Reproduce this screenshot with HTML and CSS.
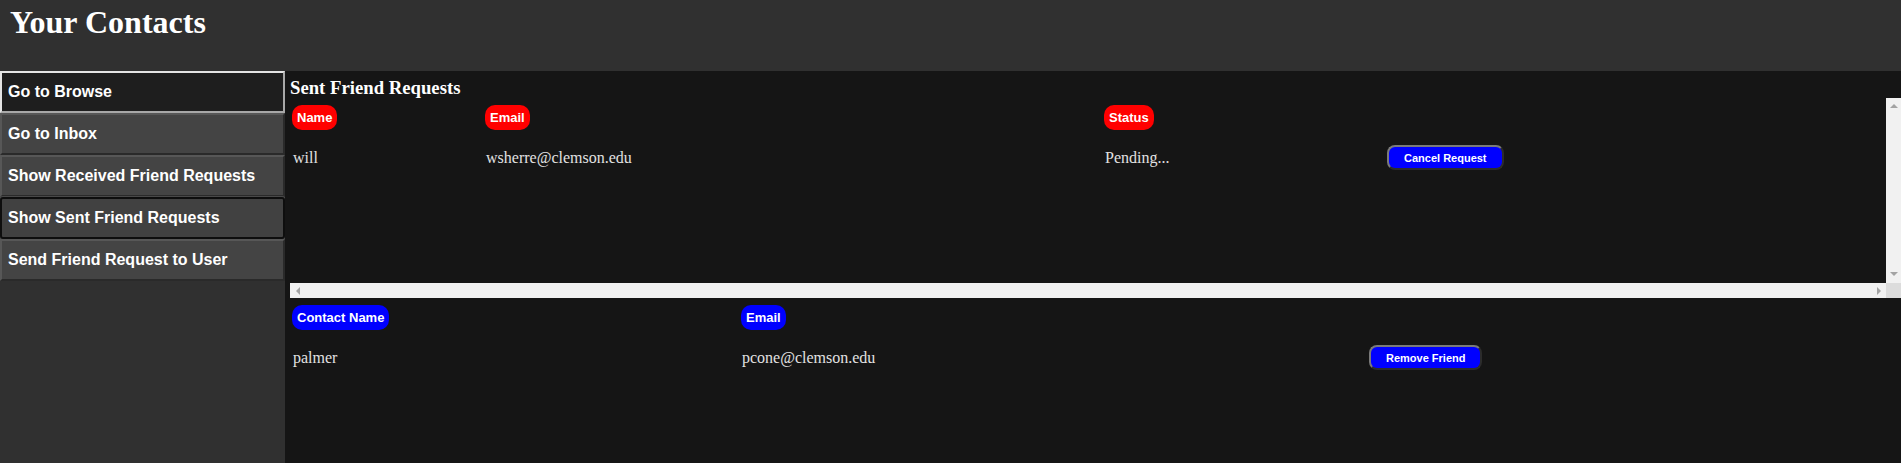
FILE: index.html
```html
<!DOCTYPE html>
<html lang="en">
<head>
<meta charset="utf-8">
<title>Your Contacts</title>
<link rel="stylesheet" href="styles.css">
</head>
<body>
<header class="page-header">
  <h1 class="page-title">Your Contacts</h1>
</header>
<div class="layout">
  <nav class="sidebar">
    <button class="nav-btn nav-btn-focus">Go to Browse</button>
    <button class="nav-btn">Go to Inbox</button>
    <button class="nav-btn">Show Received Friend Requests</button>
    <button class="nav-btn nav-btn-active">Show Sent Friend Requests</button>
    <button class="nav-btn">Send Friend Request to User</button>
  </nav>
  <main class="content">
    <h3 class="section-title">Sent Friend Requests</h3>
    <div class="scroll-frame">
      <div class="scroll-view">
        <table class="data-table requests-table">
          <colgroup>
            <col class="rq-c1"><col class="rq-c2"><col class="rq-c3"><col>
          </colgroup>
          <thead>
            <tr>
              <th><span class="pill pill-red">Name</span></th>
              <th><span class="pill pill-red">Email</span></th>
              <th><span class="pill pill-red">Status</span></th>
              <th></th>
            </tr>
          </thead>
          <tbody>
            <tr>
              <td>will</td>
              <td>wsherre@clemson.edu</td>
              <td>Pending...</td>
              <td><button class="action-btn">Cancel Request</button></td>
            </tr>
          </tbody>
        </table>
      </div>
      <div class="vbar">
        <span class="arrow arrow-up"></span>
        <span class="arrow arrow-down"></span>
      </div>
      <div class="hbar">
        <span class="arrow arrow-left"></span>
        <span class="arrow arrow-right"></span>
      </div>
      <div class="bar-corner"></div>
    </div>
    <table class="data-table contacts-table">
      <colgroup>
        <col class="ct-c1"><col class="ct-c2"><col>
      </colgroup>
      <thead>
        <tr>
          <th><span class="pill pill-blue">Contact Name</span></th>
          <th><span class="pill pill-blue">Email</span></th>
          <th></th>
        </tr>
      </thead>
      <tbody>
        <tr>
          <td>palmer</td>
          <td>pcone@clemson.edu</td>
          <td><button class="action-btn">Remove Friend</button></td>
        </tr>
      </tbody>
    </table>
  </main>
</div>
</body>
</html>
```

FILE: styles.css
```css
html, body {
  margin: 0;
  padding: 0;
  height: 100%;
}

body {
  display: flex;
  flex-direction: column;
  background: #151515;
  color: #e2e2e2;
  font-family: "Liberation Serif", "Times New Roman", serif;
}

.page-header {
  height: 71px;
  box-sizing: border-box;
  padding: 4px 0 0 10px;
  background: #303030;
  flex: none;
}

.page-title {
  margin: 0;
  font-size: 32px;
  font-weight: bold;
  color: #ffffff;
}

.layout {
  flex: 1;
  display: flex;
  min-height: 0;
}

.sidebar {
  width: 285px;
  flex: none;
  display: flex;
  flex-direction: column;
  background: #303030;
}

.nav-btn {
  height: 42px;
  box-sizing: border-box;
  margin: 0;
  padding: 0 6px;
  text-align: left;
  font-family: "Liberation Sans", Arial, sans-serif;
  font-size: 16px;
  font-weight: bold;
  color: #ffffff;
  background: #444444;
  border: 2px solid;
  border-color: #575757 #2a2a2a #2a2a2a #575757;
}

.nav-btn-focus {
  background: #1e1e1e;
  border-color: #e4e4e4 #a8a8a8 #a8a8a8 #e4e4e4;
}

.nav-btn-active {
  background: #414141;
  border: 2px solid #0e0e0e;
  border-radius: 3px;
  box-shadow: 0 0 0 1px rgba(255, 255, 255, 0.15);
}

.content {
  flex: 1;
  min-width: 0;
  padding: 6px 0 0 5px;
  background: #151515;
}

.section-title {
  margin: 0;
  font-size: 18.72px;
  font-weight: bold;
  color: #ffffff;
  line-height: 21px;
}

/* scroll container with drawn classic scrollbars */
.scroll-frame {
  height: 200px;
  display: grid;
  grid-template-columns: minmax(0, 1fr) 15px;
  grid-template-rows: minmax(0, 1fr) 15px;
}

.scroll-view {
  overflow: hidden;
  min-width: 0;
  min-height: 0;
}

.vbar {
  background: #f1f1f1;
  display: flex;
  flex-direction: column;
  align-items: center;
  justify-content: space-between;
  padding: 6px 0 7px;
}

.hbar {
  background: #f1f1f1;
  display: flex;
  align-items: center;
  justify-content: space-between;
  padding: 0 5px 0 6px;
}

.bar-corner {
  background: #dcdcdc;
}

.arrow {
  display: block;
  width: 0;
  height: 0;
}

.arrow-up {
  border-left: 4px solid transparent;
  border-right: 4px solid transparent;
  border-bottom: 4px solid #a3a3a3;
}

.arrow-down {
  border-left: 4px solid transparent;
  border-right: 4px solid transparent;
  border-top: 4px solid #a3a3a3;
}

.arrow-left {
  border-top: 4px solid transparent;
  border-bottom: 4px solid transparent;
  border-right: 4px solid #a3a3a3;
}

.arrow-right {
  border-top: 4px solid transparent;
  border-bottom: 4px solid transparent;
  border-left: 4px solid #a3a3a3;
}

.data-table {
  width: 100%;
  table-layout: fixed;
  border-collapse: collapse;
  border-spacing: 0;
}

.data-table th {
  padding: 7px 2px;
  text-align: left;
  font-size: 13px;
  line-height: 15px;
  vertical-align: top;
}

.data-table td {
  height: 41px;
  box-sizing: border-box;
  padding: 0 3px;
  font-size: 16px;
  vertical-align: middle;
  white-space: nowrap;
}

.rq-c1 { width: 193px; }
.rq-c2 { width: 619px; }
.rq-c3 { width: 282px; }

.ct-c1 { width: 449px; }
.ct-c2 { width: 627px; }

.pill {
  display: inline-block;
  vertical-align: top;
  height: 25px;
  box-sizing: border-box;
  padding: 5px 5px;
  border-radius: 10px;
  font-family: "Liberation Sans", Arial, sans-serif;
  font-size: 13px;
  line-height: 15px;
  font-weight: bold;
  color: #ffffff;
}

.pill-red { background: #ff0000; }
.pill-blue { background: #0000ff; }

.action-btn {
  display: inline-block;
  vertical-align: middle;
  height: 25px;
  margin: 0;
  padding: 0 15px;
  border: 2px solid;
  border-color: #7a7a7a #2c2c2c #2c2c2c #7a7a7a;
  border-radius: 8px;
  background: #0000ff;
  color: #ffffff;
  font-family: "Liberation Sans", Arial, sans-serif;
  font-size: 11px;
  font-weight: bold;
}
```
